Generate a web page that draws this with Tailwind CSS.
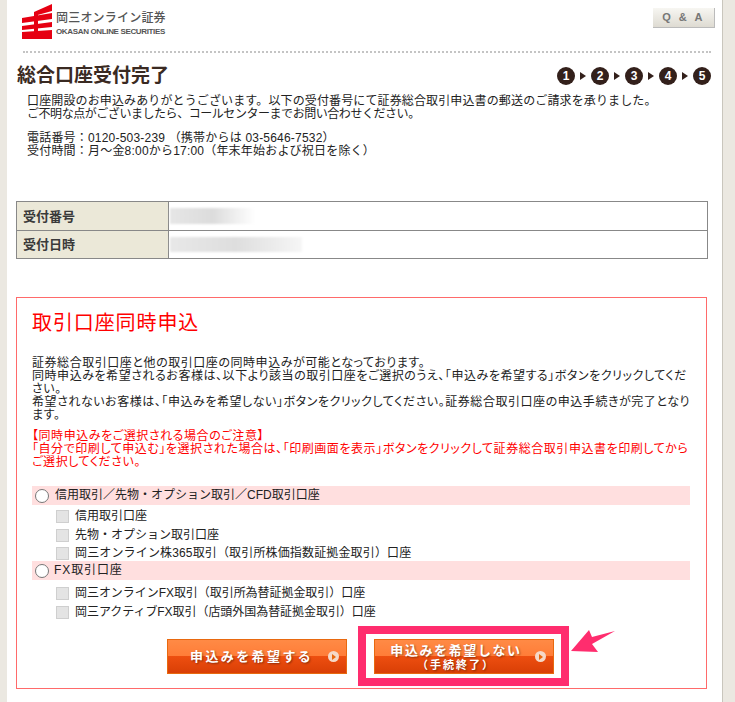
<!DOCTYPE html>
<html lang="ja">
<head>
  <meta charset="UTF-8" />
  <title>総合口座受付完了</title>
  <script src="https://cdn.jsdelivr.net/npm/@tailwindcss/browser@4"></script>
</head>
<body class="bg-[#ebe8e1] font-['Liberation_Sans','Noto_Sans_CJK_JP',sans-serif] text-[12px] leading-[13px] text-[#222]">
  <div class="relative ml-[7px] w-[716px] h-[702px] overflow-hidden bg-white border-r border-[#c9c6bd]">

    <!-- header -->
    <div class="flex justify-between items-start pl-[15px] pr-[7px] pt-[4px] h-[51px]">
      <div class="flex items-center gap-[4px]">
        <svg width="30" height="35" viewBox="0 0 30 35">
          <path d="M12 8 L30 0 V7 L12 12Z" fill="#e60012"/>
          <path d="M0 14 L30 9 V15 L0 19Z" fill="#e60012"/>
          <path d="M0 22 L30 18 V23 L0 26Z" fill="#e60012"/>
          <path d="M0 28 L30 26 V35 H0Z" fill="#e60012"/>
          <path d="M12 8 H16 V30 H12Z" fill="#e60012"/>
        </svg>
        <div class="text-[#555] mt-[3px]">
          <div class="text-[12px] leading-[16px] font-medium tracking-[0.2px]">岡三オンライン証券</div>
          <div class="text-[8px] leading-[11px] font-bold tracking-[-0.35px]">OKASAN ONLINE SECURITIES</div>
        </div>
      </div>
      <div class="mt-[4px] w-[62px] h-[20px] flex items-center justify-center bg-gradient-to-b from-[#f7f6f2] to-[#dedbd2] border-b border-r border-[#bbb] text-[#777] text-[11px] font-bold tracking-[2.5px]">Q &amp; A</div>
    </div>
    <div class="mx-[16px] h-0 w-[688px] border-t-2 border-dotted border-[#c4c4c4]"></div>

    <!-- title -->
    <div class="flex justify-between items-center pl-[10px] pr-[11px] mt-[12px] h-[22px]">
      <h1 class="text-[19px] leading-[22px] font-bold text-[#3a2a22]">総合口座受付完了</h1>
      <div class="flex items-center gap-[5px]">
        <span class="w-[18px] h-[18px] rounded-full bg-[#33201b] text-white text-[12px] font-bold flex items-center justify-center">1</span>
        <span class="border-y-[4px] border-y-transparent border-l-[6px] border-l-[#33201b]"></span>
        <span class="w-[18px] h-[18px] rounded-full bg-[#33201b] text-white text-[12px] font-bold flex items-center justify-center">2</span>
        <span class="border-y-[4px] border-y-transparent border-l-[6px] border-l-[#33201b]"></span>
        <span class="w-[18px] h-[18px] rounded-full bg-[#33201b] text-white text-[12px] font-bold flex items-center justify-center">3</span>
        <span class="border-y-[4px] border-y-transparent border-l-[6px] border-l-[#33201b]"></span>
        <span class="w-[18px] h-[18px] rounded-full bg-[#33201b] text-white text-[12px] font-bold flex items-center justify-center">4</span>
        <span class="border-y-[4px] border-y-transparent border-l-[6px] border-l-[#33201b]"></span>
        <span class="w-[18px] h-[18px] rounded-full bg-[#33201b] text-white text-[12px] font-bold flex items-center justify-center">5</span>
      </div>
    </div>

    <div class="ml-[20px] mt-[8px] whitespace-nowrap">
      <p><span class="tracking-[0.13px]">口座開設のお申込みありがとうございます。以下の受付番号にて証券総合取引申込書の郵送のご請求を承りました。</span><br><span class="tracking-[-0.45px]">ご不明な点がございましたら、コールセンターまでお問い合わせください。</span></p>
      <p class="mt-[11px] tracking-[0.2px]">電話番号：0120-503-239 （携帯からは 03-5646-7532）<br>受付時間：月～金8:00から17:00（年末年始および祝日を除く）</p>
    </div>

    <!-- table -->
    <div class="ml-[9px] mt-[43px] w-[692px] border border-[#888] border-b-0">
      <div class="flex h-[29px] border-b border-[#888]">
        <div class="w-[152px] bg-[#ebe8d8] border-r border-[#888] pl-[6px] flex items-center font-bold text-[13px] text-[#3a3a3a]">受付番号</div>
        <div class="flex items-center pl-[1px]"><div class="w-[85px] h-[16px] bg-gradient-to-r from-[#e6e6e6] via-[#dcdcdc] to-white blur-[1px]"></div></div>
      </div>
      <div class="flex h-[28px] border-b border-[#888]">
        <div class="w-[152px] bg-[#ebe8d8] border-r border-[#888] pl-[6px] flex items-center font-bold text-[13px] text-[#3a3a3a]">受付日時</div>
        <div class="flex items-center pl-[1px]"><div class="w-[132px] h-[15px] bg-gradient-to-r from-[#e8e8e8] via-[#dedede] to-[#f6f6f6] blur-[1px]"></div></div>
      </div>
    </div>

    <!-- simultaneous application -->
    <div class="ml-[9px] mt-[38px] w-[691px] h-[392px] border border-[#ff6a6a] pl-[15px] pr-[15px] whitespace-nowrap">
      <h2 class="mt-[13px] text-[20px] leading-[24px] tracking-[0.9px] text-[#f00]">取引口座同時申込</h2>
      <div class="[font-feature-settings:'palt'] tracking-[0.55px]">
        <p class="mt-[22px]">証券総合取引口座と他の取引口座の同時申込みが可能となっております。<br>同時申込みを希望されるお客様は、以下より該当の取引口座をご選択のうえ、「申込みを希望する」ボタンをクリックしてくだ<br>さい。<br>希望されないお客様は、「申込みを希望しない」ボタンをクリックしてください。証券総合取引口座の申込手続きが完了となり<br>ます。</p>
        <p class="mt-[8px] text-[#f00]">【同時申込みをご選択される場合のご注意】<br>「自分で印刷して申込む」を選択された場合は、「印刷画面を表示」ボタンをクリックして証券総合取引申込書を印刷してから<br>ご選択してください。</p>
      </div>

      <div class="mt-[17px] w-[658px]">
        <div class="flex items-center gap-[6px] h-[19px] bg-[#ffdfdf] pl-[3px]">
          <span class="w-[14px] h-[14px] rounded-full bg-white border border-[#777]"></span>信用取引／先物・オプション取引／CFD取引口座
        </div>
        <div class="flex items-center gap-[6px] h-[19px] pl-[24px] mt-[2px]"><span class="w-[13px] h-[13px] bg-[#e4e4e4] border border-[#cfcfcf]"></span>信用取引口座</div>
        <div class="flex items-center gap-[6px] h-[19px] pl-[24px]"><span class="w-[13px] h-[13px] bg-[#e4e4e4] border border-[#cfcfcf]"></span>先物・オプション取引口座</div>
        <div class="flex items-center gap-[6px] h-[16px] pl-[24px] tracking-[0.15px]"><span class="w-[13px] h-[13px] bg-[#e4e4e4] border border-[#cfcfcf]"></span>岡三オンライン株365取引（取引所株価指数証拠金取引）口座</div>
        <div class="flex items-center gap-[5px] h-[19px] bg-[#ffdfdf] pl-[3px] tracking-[0.9px]">
          <span class="w-[14px] h-[14px] rounded-full bg-white border border-[#777]"></span>FX取引口座
        </div>
        <div class="flex items-center gap-[6px] h-[19px] pl-[24px] mt-[4px] tracking-[-0.05px]"><span class="w-[13px] h-[13px] bg-[#e4e4e4] border border-[#cfcfcf]"></span>岡三オンラインFX取引（取引所為替証拠金取引）口座</div>
        <div class="flex items-center gap-[6px] h-[19px] pl-[24px] tracking-[-0.05px]"><span class="w-[13px] h-[13px] bg-[#e4e4e4] border border-[#cfcfcf]"></span>岡三アクティブFX取引（店頭外国為替証拠金取引）口座</div>
      </div>

      <div class="flex mt-[17px] pl-[135px] gap-[27px]">
        <div class="relative w-[180px] h-[35px] border border-[#e8690f] bg-[linear-gradient(#ff8a45_0,#ff7d38_48%,#ee4f10_48%,#d93f06_100%)] flex items-center pl-[22px] text-white text-[13px] font-bold tracking-[2.4px] [text-shadow:1px_1px_2px_rgba(0,0,0,0.4)]">
          申込みを希望する
          <span class="absolute right-[7px] top-[11px] w-[11px] h-[11px] rounded-full bg-[#f5d9c8] flex items-center justify-center"><span class="border-y-[3px] border-y-transparent border-l-[4px] border-l-[#e8690f] ml-[1px]"></span></span>
        </div>
        <div class="relative w-[180px] h-[35px] border border-[#e8690f] bg-[linear-gradient(#ff8a45_0,#ff7d38_48%,#ee4f10_48%,#d93f06_100%)] flex flex-col items-center justify-center pr-[16px] text-white font-bold [text-shadow:1px_1px_2px_rgba(0,0,0,0.4)]">
          <span class="text-[13px] leading-[17px] tracking-[1.6px]">申込みを希望しない</span>
          <span class="text-[11px] leading-[13px] tracking-[2px]">（手続終了）</span>
          <span class="absolute right-[7px] top-[11px] w-[11px] h-[11px] rounded-full bg-[#f5d9c8] flex items-center justify-center"><span class="border-y-[3px] border-y-transparent border-l-[4px] border-l-[#e8690f] ml-[1px]"></span></span>
        </div>
      </div>
    </div>

    <!-- annotation over the page -->
    <div class="absolute left-[351px] top-[626px] w-[211px] h-[60px] border-[8px] border-[#ff2d6e]"></div>
    <svg class="absolute left-[563px] top-[629px]" width="46" height="24" viewBox="0 0 46 24">
      <path d="M1 22 L19 1 L22 8 L45 2 L22 15 L28 23Z" fill="#ff2d6e"/>
    </svg>
  </div>
</body>
</html>
